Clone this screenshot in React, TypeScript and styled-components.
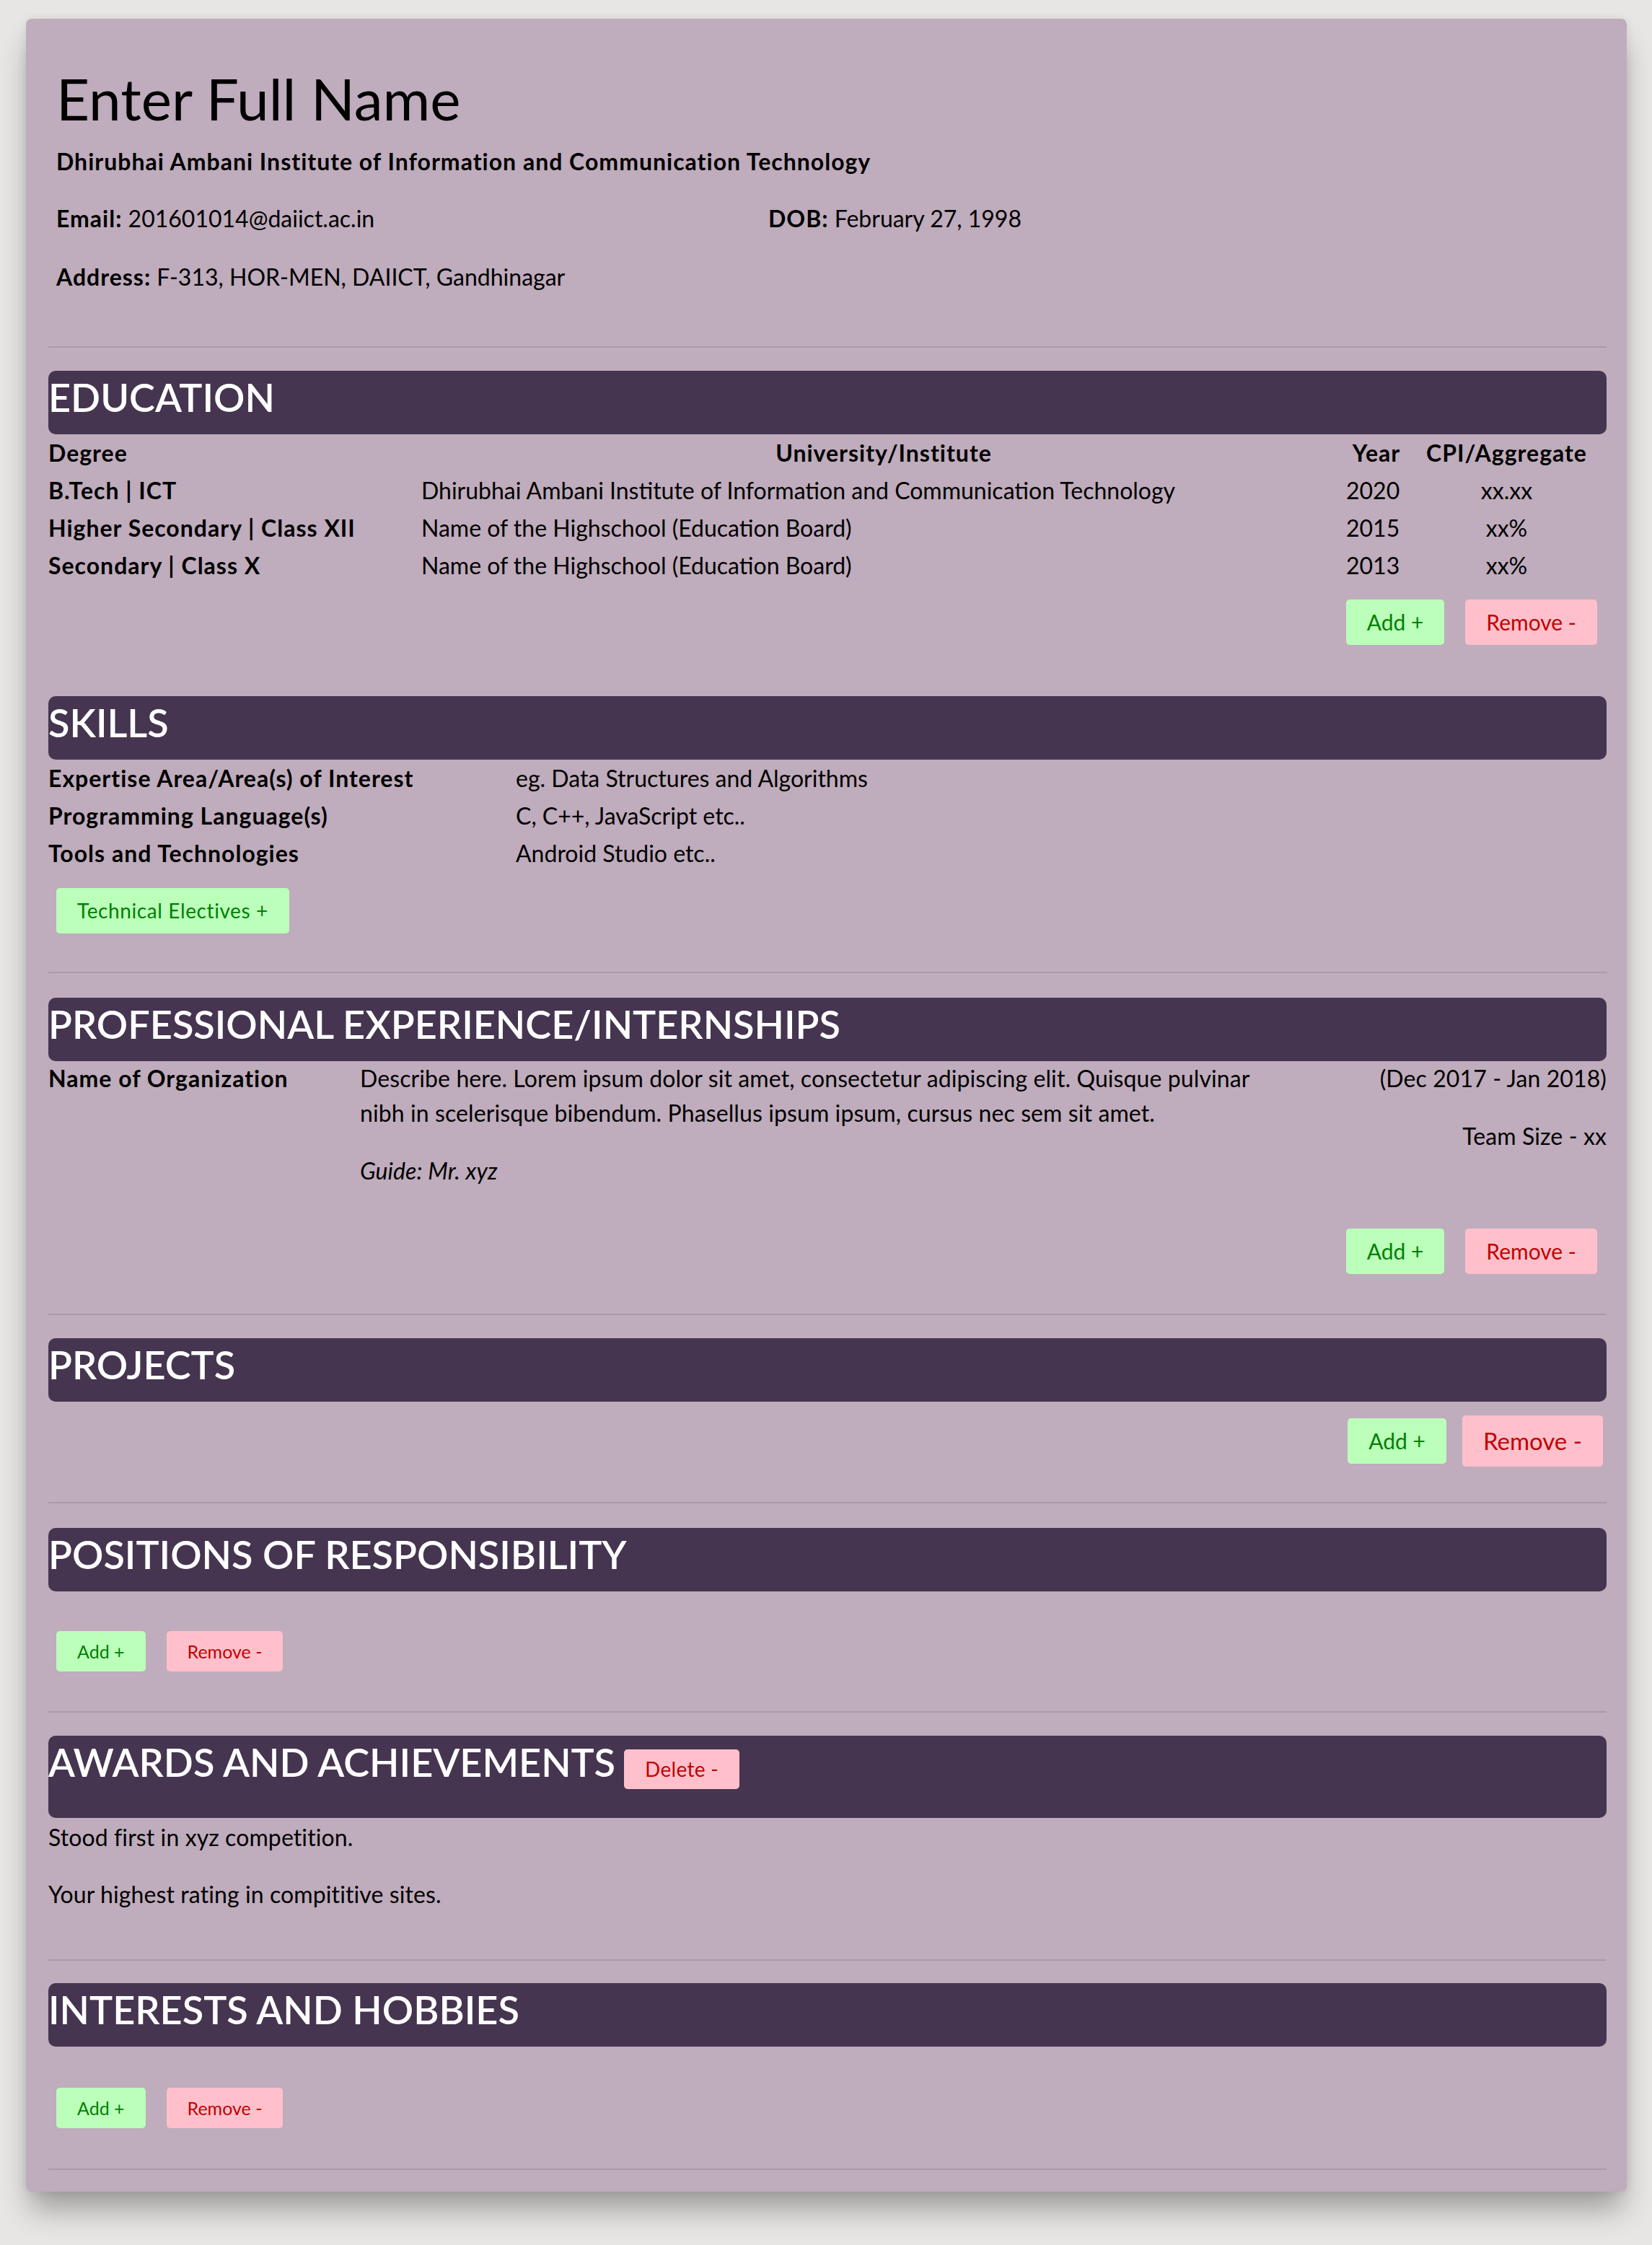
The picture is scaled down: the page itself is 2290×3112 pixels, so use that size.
import React from 'react';
import styled, { createGlobalStyle, css } from 'styled-components';

const GlobalStyle = createGlobalStyle`
  html, body { margin: 0; padding: 0; }
  body {
    background: #e8e6e4;
    font-family: Lato, "Open Sans", sans-serif;
    color: #000;
  }
  * { box-sizing: border-box; }
`;

const boldText = css`
  font-weight: 700;
  letter-spacing: 1px;
`;

const Page = styled.div`
  padding: 26px 35px 72px 36px;
`;

const Card = styled.main`
  background: #bfacbc;
  border-radius: 8px;
  padding: 0 28px 30px 31px;
  box-shadow: 0 30px 40px -6px rgba(0, 0, 0, 0.32), 0 0 14px rgba(0, 0, 0, 0.08);
`;

const Intro = styled.header`
  padding: 60px 11px 72px;
`;

const Name = styled.h1`
  margin: 0;
  font-size: 80px;
  font-weight: 400;
  line-height: 100px;
`;

const Institute = styled.p`
  margin: 14px 0 31px;
  font-size: 32px;
  line-height: 48px;
  ${boldText}
`;

const InfoGrid = styled.div`
  display: grid;
  grid-template-columns: 987px 1fr;
  row-gap: 33px;
  font-size: 32px;
  line-height: 48px;
`;

const Info = styled.div``;

const Label = styled.b`
  ${boldText}
`;

const Rule = styled.hr`
  margin: 0;
  border: 0;
  border-top: 2px solid rgba(0, 0, 0, 0.1);
`;

const Section = styled.section<{ $top: number; $bottom: number }>`
  padding-top: ${(p) => p.$top}px;
  padding-bottom: ${(p) => p.$bottom}px;
`;

const Bar = styled.div<{ $tall?: boolean }>`
  background: #453550;
  border-radius: 10px;
  padding: 3px 0 ${(p) => (p.$tall ? 40 : 18)}px;
`;

const Title = styled.h2`
  margin: 0;
  color: #fff;
  font-size: 54px;
  font-weight: 600;
  line-height: 67px;
`;

const EduGrid = styled.div`
  display: grid;
  grid-template-columns: 517px 1282px 84px 1fr;
  grid-auto-rows: 52px;
  align-items: center;
  font-size: 32px;
  line-height: 48px;
`;

const Cell = styled.div<{ $align?: 'left' | 'center'; $bold?: boolean }>`
  text-align: ${(p) => p.$align ?? 'left'};
  white-space: nowrap;
  ${(p) => p.$bold && boldText}
`;

const SkillGrid = styled.div`
  display: grid;
  grid-template-columns: 648px 1fr;
  grid-auto-rows: 52px;
  align-items: center;
  font-size: 32px;
  line-height: 48px;
`;

const ExpGrid = styled.div`
  display: grid;
  grid-template-columns: 432px 1290px 1fr;
  font-size: 32px;
  line-height: 48px;
`;

const Para = styled.p<{ $gap?: number; $italic?: boolean; $bold?: boolean; $right?: boolean }>`
  margin: ${(p) => p.$gap ?? 0}px 0 0;
  font-size: 32px;
  line-height: 48px;
  letter-spacing: 0.1px;
  font-style: ${(p) => (p.$italic ? 'italic' : 'normal')};
  text-align: ${(p) => (p.$right ? 'right' : 'left')};
  ${(p) => p.$bold && boldText}
`;

const Column = styled.div``;

const ButtonRow = styled.div<{ $end?: boolean; $gap: number; $inset: number; $top: number }>`
  display: flex;
  align-items: center;
  justify-content: ${(p) => (p.$end ? 'flex-end' : 'flex-start')};
  gap: ${(p) => p.$gap}px;
  margin-top: ${(p) => p.$top}px;
  ${(p) => (p.$end ? css`padding-right: ${p.$inset}px;` : css`padding-left: ${p.$inset}px;`)}
`;

type Size = 'sm' | 'md' | 'lg' | 'tag';

const sizes: Record<Size, ReturnType<typeof css>> = {
  sm: css`
    font-size: 25px;
    line-height: 30px;
    padding: 13px 29px;
  `,
  md: css`
    font-size: 30px;
    line-height: 37px;
    padding: 13px 29px;
  `,
  lg: css`
    font-size: 33px;
    line-height: 43px;
    padding: 14px 29px;
  `,
  tag: css`
    font-size: 28px;
    line-height: 35px;
    padding: 14px 29px;
    letter-spacing: 0.6px;
  `,
};

const Button = styled.button<{ $kind: 'add' | 'remove'; $size: Size; $compact?: boolean }>`
  border: 0;
  border-radius: 5px;
  font-family: inherit;
  font-weight: 400;
  cursor: pointer;
  background: ${(p) => (p.$kind === 'add' ? '#bbffbb' : '#ffc0cb')};
  color: ${(p) => (p.$kind === 'add' ? '#008000' : '#c20000')};
  ${(p) => sizes[p.$size]}
  ${(p) =>
    p.$compact &&
    css`
      padding-top: 10px;
      padding-bottom: 10px;
      letter-spacing: 0.3px;
    `}
`;

const DeleteButton = styled(Button)`
  margin-left: 12px;
  vertical-align: baseline;
`;

const education = [
  ['B.Tech | ICT', 'Dhirubhai Ambani Institute of Information and Communication Technology', '2020', 'xx.xx'],
  ['Higher Secondary | Class XII', 'Name of the Highschool (Education Board)', '2015', 'xx%'],
  ['Secondary | Class X', 'Name of the Highschool (Education Board)', '2013', 'xx%'],
];

const skills = [
  ['Expertise Area/Area(s) of Interest', 'eg. Data Structures and Algorithms'],
  ['Programming Language(s)', 'C, C++, JavaScript etc..'],
  ['Tools and Technologies', 'Android Studio etc..'],
];

export default function App() {
  return (
    <>
      <GlobalStyle />
      <Page>
        <Card>
          <Intro>
            <Name>Enter Full Name</Name>
            <Institute>Dhirubhai Ambani Institute of Information and Communication Technology</Institute>
            <InfoGrid>
              <Info>
                <Label>Email:</Label> 201601014@daiict.ac.in
              </Info>
              <Info>
                <Label>DOB:</Label> February 27, 1998
              </Info>
              <Info>
                <Label>Address:</Label> F-313, HOR-MEN, DAIICT, Gandhinagar
              </Info>
            </InfoGrid>
          </Intro>
          <Rule />

          <Section $top={32} $bottom={71}>
            <Bar>
              <Title>EDUCATION</Title>
            </Bar>
            <EduGrid>
              <Cell $bold>Degree</Cell>
              <Cell $bold $align="center">University/Institute</Cell>
              <Cell $bold $align="center">Year</Cell>
              <Cell $bold $align="center">CPI/Aggregate</Cell>
              {education.map((row) => (
                <React.Fragment key={row[0]}>
                  <Cell $bold>{row[0]}</Cell>
                  <Cell>{row[1]}</Cell>
                  <Cell>{row[2]}</Cell>
                  <Cell $align="center">{row[3]}</Cell>
                </React.Fragment>
              ))}
            </EduGrid>
            <ButtonRow $end $gap={29} $inset={13} $top={21}>
              <Button $kind="add" $size="md">Add +</Button>
              <Button $kind="remove" $size="md">Remove -</Button>
            </ButtonRow>
          </Section>

          <Section $top={0} $bottom={53}>
            <Bar>
              <Title>SKILLS</Title>
            </Bar>
            <SkillGrid>
              {skills.map((row) => (
                <React.Fragment key={row[0]}>
                  <Cell $bold>{row[0]}</Cell>
                  <Cell>{row[1]}</Cell>
                </React.Fragment>
              ))}
            </SkillGrid>
            <ButtonRow $gap={29} $inset={11} $top={22}>
              <Button $kind="add" $size="tag">Technical Electives +</Button>
            </ButtonRow>
          </Section>
          <Rule />

          <Section $top={34} $bottom={55}>
            <Bar>
              <Title>PROFESSIONAL EXPERIENCE/INTERNSHIPS</Title>
            </Bar>
            <ExpGrid>
              <Column>
                <Para $bold>Name of Organization</Para>
              </Column>
              <Column>
                <Para>
                  Describe here. Lorem ipsum dolor sit amet, consectetur adipiscing elit. Quisque pulvinar nibh in
                  scelerisque bibendum. Phasellus ipsum ipsum, cursus nec sem sit amet.
                </Para>
                <Para $gap={32} $italic>
                  Guide: Mr. xyz
                </Para>
              </Column>
              <Column>
                <Para $right>(Dec 2017 - Jan 2018)</Para>
                <Para $gap={32} $right>
                  Team Size - xx
                </Para>
              </Column>
            </ExpGrid>
            <ButtonRow $end $gap={29} $inset={13} $top={56}>
              <Button $kind="add" $size="md">Add +</Button>
              <Button $kind="remove" $size="md">Remove -</Button>
            </ButtonRow>
          </Section>
          <Rule />

          <Section $top={32} $bottom={49}>
            <Bar>
              <Title>PROJECTS</Title>
            </Bar>
            <ButtonRow $end $gap={22} $inset={5} $top={19}>
              <Button $kind="add" $size="md">Add +</Button>
              <Button $kind="remove" $size="lg">Remove -</Button>
            </ButtonRow>
          </Section>
          <Rule />

          <Section $top={34} $bottom={55}>
            <Bar>
              <Title>POSITIONS OF RESPONSIBILITY</Title>
            </Bar>
            <ButtonRow $gap={29} $inset={11} $top={55}>
              <Button $kind="add" $size="sm">Add +</Button>
              <Button $kind="remove" $size="sm">Remove -</Button>
            </ButtonRow>
          </Section>
          <Rule />

          <Section $top={32} $bottom={66}>
            <Bar $tall>
              <Title>
                AWARDS AND ACHIEVEMENTS
                <DeleteButton $kind="remove" $size="tag" $compact>
                  Delete -
                </DeleteButton>
              </Title>
            </Bar>
            <Para $gap={3}>Stood first in xyz competition.</Para>
            <Para $gap={31}>Your highest rating in compititive sites.</Para>
          </Section>
          <Rule />

          <Section $top={31} $bottom={56}>
            <Bar>
              <Title>INTERESTS AND HOBBIES</Title>
            </Bar>
            <ButtonRow $gap={29} $inset={11} $top={57}>
              <Button $kind="add" $size="sm">Add +</Button>
              <Button $kind="remove" $size="sm">Remove -</Button>
            </ButtonRow>
          </Section>
          <Rule />
        </Card>
      </Page>
    </>
  );
}
